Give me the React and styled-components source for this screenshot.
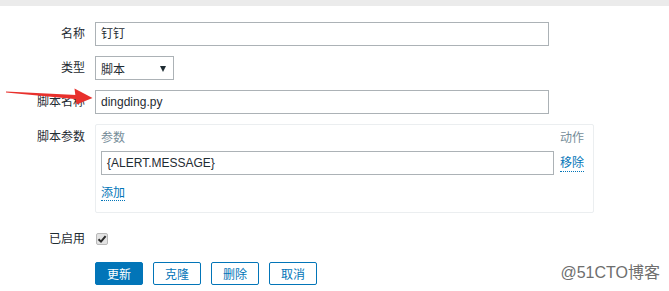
import styled, { createGlobalStyle } from "styled-components";

const GlobalStyle = createGlobalStyle`
    body {
        margin: 0;
        background: #fff;
        font-family: "Liberation Sans", "Noto Sans CJK SC", sans-serif;
        font-size: 12px;
        color: #1f2c33;
    }
`;

const App = () => {
    return (
        <Page>
            <GlobalStyle />
            <TopBand />
            <Form>
                <Row>
                    <Label>名称</Label>
                    <TextBox width={454}>钉钉</TextBox>
                </Row>
                <Row>
                    <Label>类型</Label>
                    <SelectBox>
                        <span>脚本</span>
                        <Caret />
                    </SelectBox>
                </Row>
                <Row>
                    <Label>脚本名称</Label>
                    <TextBox width={454}>dingding.py</TextBox>
                </Row>
                <Row top>
                    <Label top>脚本参数</Label>
                    <ParamBox>
                        <ParamHead>参数</ParamHead>
                        <ParamHead right>动作</ParamHead>
                        <TextBox width={453}>{"{ALERT.MESSAGE}"}</TextBox>
                        <LinkText>移除</LinkText>
                        <AddRow>
                            <LinkText>添加</LinkText>
                        </AddRow>
                    </ParamBox>
                </Row>
                <Row extra={4}>
                    <Label>已启用</Label>
                    <CheckBox>
                        <svg width="10" height="10" viewBox="0 0 10 10">
                            <path d="M1.5 5.2 L4 7.6 L8.6 2.2" fill="none" stroke="#2b2b2b" strokeWidth="2" />
                        </svg>
                    </CheckBox>
                </Row>
                <ButtonRow>
                    <Button primary>更新</Button>
                    <Button>克隆</Button>
                    <Button>删除</Button>
                    <Button>取消</Button>
                </ButtonRow>
            </Form>

            {/* red annotation arrow drawn over the form */}
            <Arrow width="100" height="20" viewBox="0 84 100 20">
                <polygon points="6,91.6 6,92.6 77,99.2 76.6,95" fill="#e8302c" />
                <polygon points="74.5,88.5 92.5,98 76.5,104.5" fill="#e8302c" />
            </Arrow>

            <Watermark>@51CTO博客</Watermark>
        </Page>
    );
};

export default App;


const Page = styled.div`
    position: relative;
    width: 669px;
    height: 291px;
    overflow: hidden;
    background: #fff;
`;

const TopBand = styled.div`
    height: 6px;
    background: #ebebeb;
`;

const Form = styled.div`
    display: flex;
    flex-direction: column;
    gap: 10px;
    padding-top: 16px;
`;

const Row = styled.div`
    display: grid;
    grid-template-columns: 85px auto;
    column-gap: 10px;
    align-items: ${(p) => (p.top ? "start" : "center")};
    justify-content: start;
    min-height: 24px;
    margin-top: ${(p) => p.extra || 0}px;
`;

const Label = styled.div`
    text-align: right;
    line-height: 18px;
    padding-top: ${(p) => (p.top ? "4px" : "0")};
    color: #1f2c33;
`;

const TextBox = styled.div`
    box-sizing: border-box;
    width: ${(p) => p.width}px;
    height: 24px;
    line-height: 22px;
    padding: 0 5px;
    border: 1px solid #acb2b6;
    background: #fff;
    color: #1f2c33;
    white-space: nowrap;
`;

const SelectBox = styled.div`
    box-sizing: border-box;
    width: 79px;
    height: 24px;
    display: flex;
    align-items: center;
    justify-content: space-between;
    padding: 0 7px 0 5px;
    border: 1px solid #acb2b6;
    background: #fff;
`;

const Caret = styled.span`
    width: 0;
    height: 0;
    border-left: 3.5px solid transparent;
    border-right: 3.5px solid transparent;
    border-top: 6px solid #1f2c33;
    margin-top: 1px;
`;

const ParamBox = styled.div`
    box-sizing: border-box;
    width: 499px;
    display: grid;
    grid-template-columns: auto 1fr;
    column-gap: 6px;
    align-items: center;
    padding: 4px 9px 10px 5px;
    border: 1px solid #ebeef0;
    border-radius: 2px;
`;

const ParamHead = styled.div`
    color: #768d99;
    line-height: 18px;
    margin-bottom: 4px;
    text-align: ${(p) => (p.right ? "right" : "left")};
`;

const LinkText = styled.span`
    color: #0275b8;
    line-height: 16px;
    border-bottom: 1px dotted #0275b8;
    justify-self: start;
`;

const AddRow = styled.div`
    grid-column: 1 / -1;
    margin-top: 9px;
    line-height: 18px;
`;

const CheckBox = styled.span`
    box-sizing: border-box;
    width: 12px;
    height: 12px;
    margin-left: 1px;
    display: flex;
    align-items: center;
    justify-content: center;
    background: #e3e3e3;
    border: 1px solid #b9b9b9;
    border-radius: 2px;
`;

const ButtonRow = styled.div`
    display: flex;
    gap: 10px;
    padding-left: 95px;
    margin-top: 1px;
`;

const Button = styled.button`
    box-sizing: border-box;
    width: 48px;
    height: 23px;
    padding: 0;
    font-family: inherit;
    font-size: 12px;
    border: 1px solid #0275b8;
    border-radius: 2px;
    background: ${(p) => (p.primary ? "#0275b8" : "#fff")};
    color: ${(p) => (p.primary ? "#fff" : "#0275b8")};
`;

const Arrow = styled.svg`
    position: absolute;
    left: 0;
    top: 84px;
`;

const Watermark = styled.div`
    position: absolute;
    right: 9px;
    bottom: 8px;
    font-size: 16px;
    color: #6e6e6e;
    font-family: "Liberation Sans", "Noto Sans CJK SC", sans-serif;
`;
